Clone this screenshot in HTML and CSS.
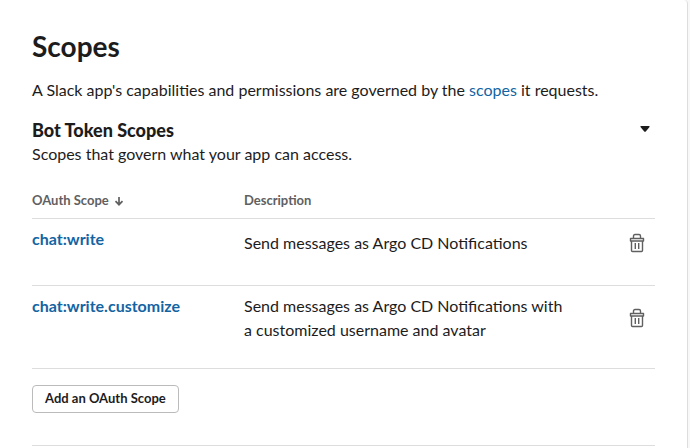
FILE: index.html
```html
<!DOCTYPE html>
<html lang="en">
<head>
    <meta charset="UTF-8">
    <meta name="viewport" content="width=device-width, initial-scale=1.0">
    <title>Scopes</title>
    <link rel="stylesheet" href="styles.css">
</head>
<body>
    <main class="card">
        <h1>Scopes</h1>
        <p class="intro">A Slack app's capabilities and permissions are governed by the <a href="#scopes">scopes</a> it requests.</p>

        <section id="scopes">
            <div class="section-header">
                <div>
                    <h2>Bot Token Scopes</h2>
                    <p>Scopes that govern what your app can access.</p>
                </div>
                <button class="toggle" type="button" aria-label="Collapse Bot Token Scopes" aria-expanded="true">
                    <svg width="10" height="6" viewBox="0 0 10 6"><path d="M1 0h8q1 0 .5 1L6 5.300q-1 1-2 0L.5 1Q0 0 1 0z" fill="currentColor"/></svg>
                </button>
            </div>

            <table class="scopes-table">
                <thead>
                    <tr>
                        <th class="scope-col">OAuth Scope
                            <svg class="sort-icon" width="10" height="10" viewBox="0 0 10 10"><path d="M5 1v7.500M1.500 5.200L5 8.700l3.500-3.500" fill="none" stroke="currentColor" stroke-width="1.700"/></svg>
                        </th>
                        <th>Description</th>
                        <td class="delete-col"></td>
                    </tr>
                </thead>
                <tbody>
                    <tr>
                        <td class="scope-col"><a href="#chat-write">chat:write</a></td>
                        <td class="description">Send messages as Argo CD Notifications</td>
                        <td class="delete-col">
                            <button class="delete" type="button" aria-label="Delete chat:write">
                                <svg width="16" height="20" viewBox="0 0 16 20"><path d="M1.500 5.500h13v2.500h-13zM2.500 8v9.500q0 1 1 1h9q1 0 1-1V8M4.500 5V3q0-1.500 1.500-1.500h4q1.500 0 1.500 1.500V5M6.300 10v6M9.700 10v6" fill="none" stroke="currentColor" stroke-width="1.400" stroke-linejoin="round"/></svg>
                            </button>
                        </td>
                    </tr>
                    <tr>
                        <td class="scope-col"><a href="#chat-write-customize">chat:write.customize</a></td>
                        <td class="description">Send messages as Argo CD Notifications with a customized username and avatar</td>
                        <td class="delete-col">
                            <button class="delete" type="button" aria-label="Delete chat:write.customize">
                                <svg width="16" height="20" viewBox="0 0 16 20"><path d="M1.500 5.500h13v2.500h-13zM2.500 8v9.500q0 1 1 1h9q1 0 1-1V8M4.500 5V3q0-1.500 1.500-1.500h4q1.500 0 1.500 1.500V5M6.300 10v6M9.700 10v6" fill="none" stroke="currentColor" stroke-width="1.400" stroke-linejoin="round"/></svg>
                            </button>
                        </td>
                    </tr>
                </tbody>
            </table>

            <button class="add-scope" type="button">Add an OAuth Scope</button>
        </section>
        <hr>
    </main>
</body>
</html>
```

FILE: styles.css
```css
* {
    box-sizing: border-box;
}
body {
    margin: 0;
    background-color: #f8f8f8;
    color: #1d1c1d;
    font-family: Lato, sans-serif;
    font-size: 16px;
    line-height: 24px;
}
.card {
    min-height: 100vh;
    margin-right: 2px;
    padding: 28px 32px 0;
    background-color: #fff;
    border-right: 1px solid #ddd;
    border-top-right-radius: 4px;
}
h1, h2, p {
    margin: 0;
}
h1 {
    font-size: 28px;
    line-height: 36px;
}
h2 {
    font-size: 18px;
    font-weight: 900;
}
a {
    color: #1264a3;
    text-decoration: none;
}
a:hover {
    text-decoration: underline;
}
button {
    color: inherit;
    font-family: inherit;
    background: none;
    border: none;
    cursor: pointer;
}
.intro {
    margin: 14px 0 16px;
}
.section-header {
    display: flex;
    justify-content: space-between;
    align-items: flex-start;
}
.toggle {
    display: flex;
    padding: 8px 5px;
}
.scopes-table {
    width: 100%;
    margin-top: 16px;
    border-collapse: collapse;
    table-layout: fixed;
}
.scopes-table th,
.scopes-table td {
    padding: 0;
    text-align: left;
    border-bottom: 1px solid #ddd;
}
.scopes-table th {
    height: 36px;
    color: #616061;
    font-size: 13px;
    font-weight: bold;
}
.sort-icon {
    margin-left: 2px;
    vertical-align: -1px;
}
.scopes-table .scope-col {
    width: 212px;
}
.scopes-table .delete-col {
    width: 84px;
    padding-right: 10px;
    text-align: right;
}
.scopes-table tbody .scope-col {
    padding-top: 8px;
    font-weight: bold;
    vertical-align: top;
}
.scopes-table .description {
    padding: 8px 0 26px;
}
.scopes-table tbody .delete-col {
    padding-bottom: 12px;
}
.scopes-table tbody tr {
    height: 67px;
}
.delete {
    padding: 0;
    color: #616061;
}
.delete svg {
    display: block;
}
.add-scope {
    display: block;
    height: 28px;
    margin: 16px 0 32px;
    padding: 0 12px 2px;
    font-size: 13px;
    font-weight: bold;
    border: 1px solid #bbb;
    border-radius: 4px;
}
hr {
    margin: 0;
    border: none;
    border-top: 1px solid #ddd;
}
```
